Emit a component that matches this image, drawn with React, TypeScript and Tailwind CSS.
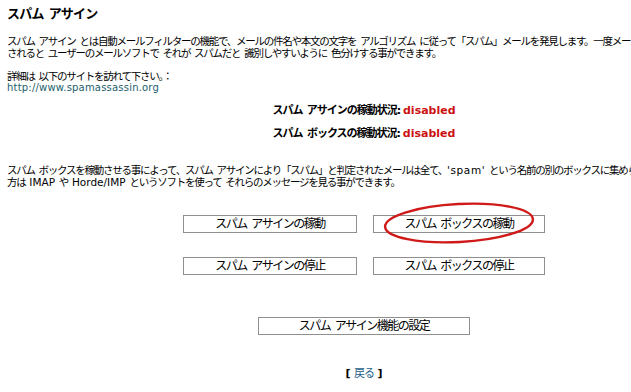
import React from "react";

const jp = { fontFamily: '"DejaVu Sans", "Noto Sans CJK JP", sans-serif' };

function S() {
  return <span className="tracking-[0.5px]"> </span>;
}

function Btn({ label, w }: { label: React.ReactNode; w: string }) {
  return (
    <div
      className={`${w} h-[18px] border border-[#8f8f8f] bg-white flex items-center justify-center text-[12px] leading-none tracking-[-1.5px] text-black whitespace-nowrap`}
    >
      <span>{label}</span>
    </div>
  );
}

export default function App() {
  return (
    <div className="w-[631px] h-[392px] overflow-hidden bg-white text-black" style={jp}>
      <div className="w-[728px] pl-[7px] pr-[7px]">
        <div className="pt-[6px] h-[22px] text-[13px] leading-[16px] font-bold tracking-[-0.8px] whitespace-nowrap">
          スパム<S />アサイン
        </div>
        <div className="mt-[13px] text-[10.5px] leading-[12px] tracking-[-1.25px] whitespace-nowrap">
          スパム<S />アサイン<S />とは自動メールフィルターの機能で、メールの件名や本文の文字を<S />アルゴリズム<S />に従って「スパム」メールを発見します。一度メールと判定
          <br />
          されると<S />ユーザーのメールソフトで<S />それが<S />スパムだと<S />識別しやすいように<S />色分けする事ができます。
        </div>
        <div className="mt-[11px] text-[10.5px] leading-[12px] tracking-[-1.25px] whitespace-nowrap">
          詳細は<S />以下のサイトを訪れて下さい。：
        </div>
        <div className="text-[10px] leading-[12px] tracking-[0.2px] text-[#1d5e6b] whitespace-nowrap">
          http://www.spamassassin.org
        </div>
        <div className="mt-[10px] flex justify-center">
          <div className="text-[11px] leading-[14px] font-bold whitespace-nowrap">
            <span className="tracking-[-1px]">スパム<S />アサインの稼動状況: </span>
            <span className="text-[#cc1111]">disabled</span>
          </div>
        </div>
        <div className="mt-[9px] flex justify-center">
          <div className="text-[11px] leading-[14px] font-bold whitespace-nowrap">
            <span className="tracking-[-1px]">スパム<S />ボックスの稼動状況: </span>
            <span className="text-[#cc1111]">disabled</span>
          </div>
        </div>
        <div className="mt-[23px] text-[10.5px] leading-[12px] tracking-[-1.25px] whitespace-nowrap">
          スパム<S />ボックスを稼動させる事によって、スパム<S />アサインにより「スパム」と判定されたメールは全て、<span className="tracking-[0.6px]">'spam'</span><S />という名前の別のボックスに集められます。ユーザーの
          <br />
          方は<S /><span className="tracking-[0px]">IMAP</span><S />や<S /><span className="tracking-[0px]">Horde/IMP</span><S />というソフトを使って<S />それらのメッセージを見る事ができます。
        </div>
        <div className="mt-[27px] flex justify-center gap-[16px]">
          <Btn label={<>スパム<S />アサインの稼動</>} w="w-[174px]" />
          <div className="relative">
            <Btn label={<>スパム<S />ボックスの稼動</>} w="w-[172px]" />
            <svg
              className="absolute left-[7px] top-[-14px] pointer-events-none"
              width="160"
              height="46"
              viewBox="0 0 160 46"
            >
              <ellipse
                cx="79"
                cy="22"
                rx="74"
                ry="19"
                fill="none"
                stroke="#d01a1a"
                strokeWidth="2.4"
                transform="rotate(-3 79 22)"
              />
            </svg>
          </div>
        </div>
        <div className="mt-[24px] flex justify-center gap-[16px]">
          <Btn label={<>スパム<S />アサインの停止</>} w="w-[174px]" />
          <Btn label={<>スパム<S />ボックスの停止</>} w="w-[172px]" />
        </div>
        <div className="mt-[42px] flex justify-center">
          <Btn label={<>スパム<S />アサイン機能の設定</>} w="w-[212px]" />
        </div>
        <div className="mt-[32px] flex justify-center">
          <div className="text-[11px] leading-[14px] whitespace-nowrap">
            <span className="font-bold">[</span>{" "}
            <span className="text-[#1d5e8b] tracking-[-1px]">戻る</span>{" "}
            <span className="font-bold">]</span>
          </div>
        </div>
      </div>
    </div>
  );
}
